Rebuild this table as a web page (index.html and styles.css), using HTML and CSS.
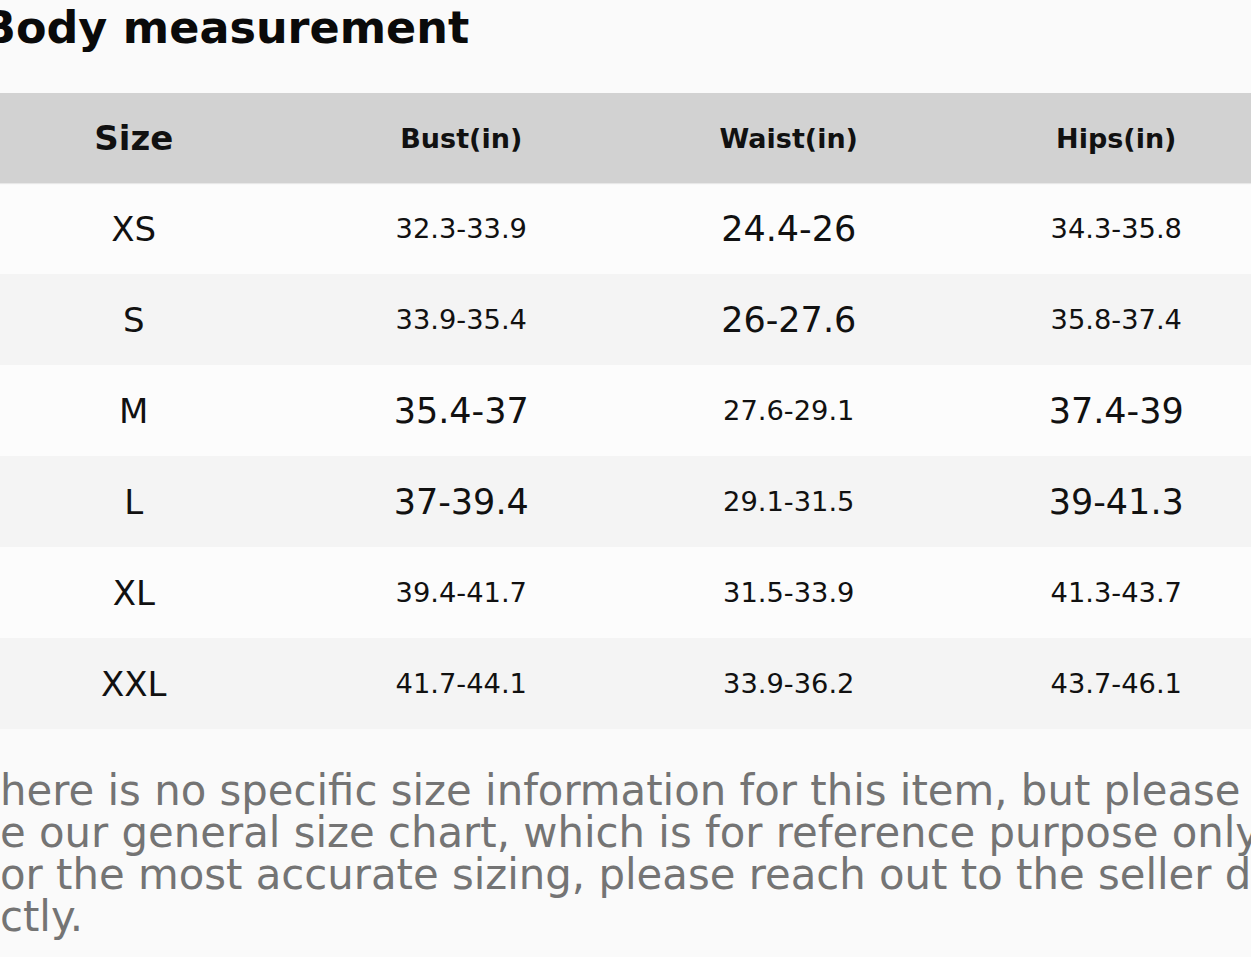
FILE: index.html
```html
<!DOCTYPE html>
<html lang="en">
<head>
<meta charset="utf-8">
<title>Body measurement</title>
<link rel="stylesheet" href="styles.css">
</head>
<body>
<main class="page">
  <h1 class="title">Body measurement</h1>
  <div class="chart">
    <div class="row head">
      <div class="cell size-h">Size</div>
      <div class="cell">Bust(in)</div>
      <div class="cell">Waist(in)</div>
      <div class="cell">Hips(in)</div>
    </div>
    <div class="row">
      <div class="cell size">XS</div>
      <div class="cell">32.3-33.9</div>
      <div class="cell big">24.4-26</div>
      <div class="cell">34.3-35.8</div>
    </div>
    <div class="row alt">
      <div class="cell size">S</div>
      <div class="cell">33.9-35.4</div>
      <div class="cell big">26-27.6</div>
      <div class="cell">35.8-37.4</div>
    </div>
    <div class="row">
      <div class="cell size">M</div>
      <div class="cell big">35.4-37</div>
      <div class="cell">27.6-29.1</div>
      <div class="cell big">37.4-39</div>
    </div>
    <div class="row alt">
      <div class="cell size">L</div>
      <div class="cell big">37-39.4</div>
      <div class="cell">29.1-31.5</div>
      <div class="cell big">39-41.3</div>
    </div>
    <div class="row">
      <div class="cell size">XL</div>
      <div class="cell">39.4-41.7</div>
      <div class="cell">31.5-33.9</div>
      <div class="cell">41.3-43.7</div>
    </div>
    <div class="row alt">
      <div class="cell size">XXL</div>
      <div class="cell">41.7-44.1</div>
      <div class="cell">33.9-36.2</div>
      <div class="cell">43.7-46.1</div>
    </div>
  </div>
  <div class="note">
    <div class="line">here is no specific size information for this item, but please</div>
    <div class="line">e our general size chart, which is for reference purpose only.</div>
    <div class="line">or the most accurate sizing, please reach out to the seller directly.</div>
    <div class="line">ctly.</div>
  </div>
</main>
</body>
</html>
```

FILE: styles.css
```css
html, body {
  margin: 0;
  padding: 0;
  overflow: hidden;
  background: #fafafa;
}

body {
  font-family: "DejaVu Sans", Verdana, sans-serif;
  color: #111;
}

.page {
  width: 1251px;
  height: 957px;
  overflow: hidden;
}

.title {
  margin: 0 0 40px -18px;
  padding-top: 2px;
  font-size: 44.5px;
  font-weight: bold;
  line-height: 51px;
  color: #0a0a0a;
  white-space: nowrap;
}

.chart {
  width: 1310px;
  margin-left: -30px;
  display: flex;
  flex-direction: column;
}

.row {
  display: grid;
  grid-template-columns: repeat(4, 1fr);
  height: 91px;
  background: #fcfcfc;
}

.row.alt {
  background: #f4f4f4;
}

.row.head {
  height: 90px;
  background: #d2d2d2;
  box-shadow: 0 1px 1px rgba(0, 0, 0, 0.08);
  font-weight: bold;
  position: relative;
}

.cell {
  display: flex;
  align-items: center;
  justify-content: center;
  font-size: 27.3px;
  white-space: nowrap;
}

.head .cell {
  font-size: 27px;
}

.head .size-h {
  font-size: 34px;
}

.cell.size {
  font-size: 34px;
}

.cell.big {
  font-size: 35px;
}

.note {
  padding-top: 41px;
  font-size: 41.8px;
  line-height: 42px;
  color: #747474;
}

.line {
  white-space: nowrap;
}
```
